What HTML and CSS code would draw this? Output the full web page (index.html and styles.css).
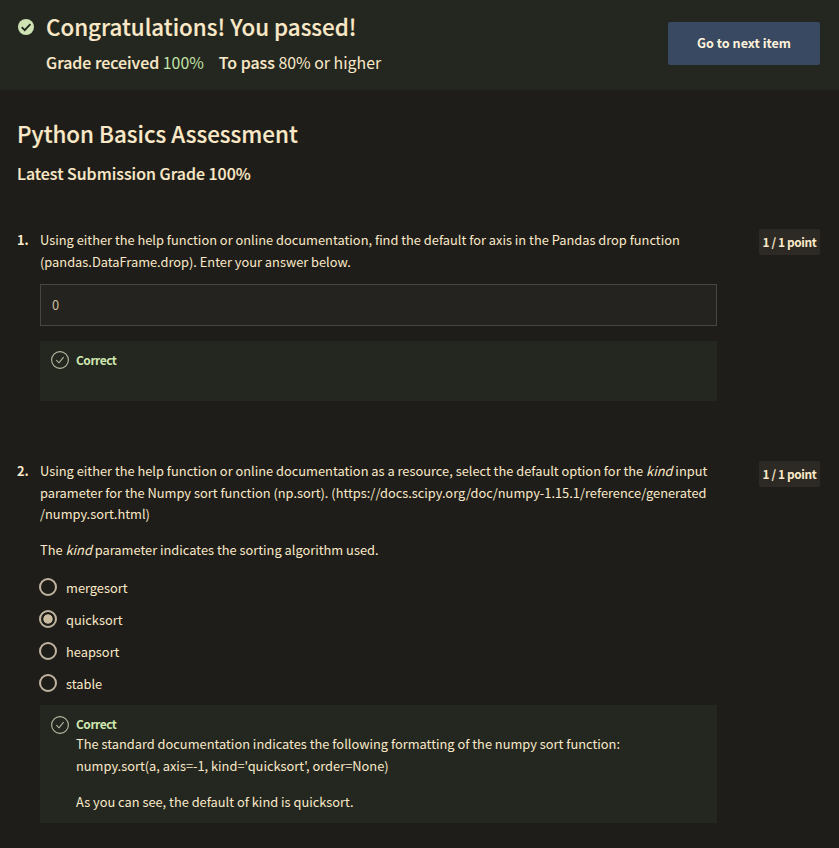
FILE: index.html
```html
<!DOCTYPE html>
<html lang="en">
<head>
<meta charset="utf-8">
<title>Python Basics Assessment</title>
<link rel="stylesheet" href="styles.css">
</head>
<body>
<header class="banner">
  <svg class="passed-icon" viewBox="0 0 16 16"><circle cx="8" cy="8" r="8"/><path d="M3.7 8.2 6.7 11.1 12.4 5.1"/></svg>
  <div class="result">
    <h1>Congratulations! You passed!</h1>
    <p class="grades"><span><b>Grade received</b> <span class="score">100%</span></span><span><b>To pass</b> 80% or higher</span></p>
  </div>
  <button class="next">Go to next item</button>
</header>
<main>
  <h2>Python Basics Assessment</h2>
  <h3>Latest Submission Grade 100%</h3>
  <section class="question">
    <span class="number">1.</span>
    <div class="content">
      <p>Using either the help function or online documentation, find the default for axis in the Pandas drop function<br>(pandas.DataFrame.drop). Enter your answer below.</p>
      <div class="answer">0</div>
      <div class="feedback empty">
        <svg class="check" viewBox="0 0 18 18"><circle cx="9" cy="9" r="8.4"/><path d="M5.3 9.2 8 11.8 12.6 6.2"/></svg>
        <div><strong>Correct</strong></div>
      </div>
    </div>
    <span class="points">1 / 1 point</span>
  </section>
  <section class="question second">
    <span class="number">2.</span>
    <div class="content">
      <p>Using either the help function or online documentation as a resource, select the default option for the <i>kind</i> input<br>parameter for the Numpy sort function (np.sort). (https://docs.scipy.org/doc/numpy-1.15.1/reference/generated<br>/numpy.sort.html)</p>
      <p class="spaced">The <i>kind</i> parameter indicates the sorting algorithm used.</p>
      <ul class="options">
        <li><span class="radio"></span>mergesort</li>
        <li><span class="radio selected"></span>quicksort</li>
        <li><span class="radio"></span>heapsort</li>
        <li><span class="radio"></span>stable</li>
      </ul>
      <div class="feedback">
        <svg class="check" viewBox="0 0 18 18"><circle cx="9" cy="9" r="8.4"/><path d="M5.3 9.2 8 11.8 12.6 6.2"/></svg>
        <div><strong>Correct</strong>
          <p>The standard documentation indicates the following formatting of the numpy sort function:<br>numpy.sort(a, axis=-1, kind='quicksort', order=None)</p>
          <p class="spaced">As you can see, the default of kind is quicksort.</p>
        </div>
      </div>
    </div>
    <span class="points">1 / 1 point</span>
  </section>
</main>
</body>
</html>
```
FILE: styles.css
```css
* { box-sizing: border-box; }
body { margin: 0; background: #1f1d19; color: #fae9c8; font: 12.83px/21.6px "Noto Sans CJK SC", "Noto Sans", sans-serif; }
h1, h2, h3, p, ul { margin: 0; padding: 0; }
.banner { display: flex; align-items: flex-start; height: 90px; padding: 0 19px 0 18px; background: #242620; }
.passed-icon { width: 16px; height: 16px; margin: 19px 12px 0 0; fill: #cfe2b4; flex: none; }
.passed-icon path { fill: none; stroke: #20241c; stroke-width: 1.8; }
.result { flex: 1; }
h1, h2, h3, .grades b { -webkit-text-stroke: .15px currentColor; }
h1 { font-size: 22.35px; font-weight: 500; line-height: 32px; margin-top: 10px; }
.grades { display: flex; gap: 15px; font-size: 15.9px; line-height: 24px; margin-top: 9px; }
.grades b { font-weight: 500; }
.score { color: #c1e3a7; }
.next { width: 152px; height: 43px; margin-top: 22px; padding: 0 0 1px; border: 0; border-radius: 2px; background: #394961; color: #fff3dc; font: 700 12.6px/20px "Noto Sans CJK SC", "Noto Sans", sans-serif; }
main { padding: 26px 19px 0 17px; }
h2 { font-size: 22.35px; font-weight: 500; line-height: 34px; }
h3 { font-size: 15.95px; font-weight: 500; line-height: 24px; margin-top: 11px; }
.question { display: grid; grid-template-columns: 23px 677px 1fr; align-items: start; margin-top: 44px; }
.question.second { margin-top: 59px; }
.number { font-weight: 700; }
.points { justify-self: end; width: 61px; height: 26px; border-radius: 2px; background: #2d2a25; font-weight: 700; font-size: 11.9px; letter-spacing: -.38px; line-height: 25px; text-align: center; }
.second .points { margin-top: 1px; }
.answer { height: 42px; margin-top: 12px; padding: 0 11px; border: 1px solid #484640; background: #25231f; line-height: 40px; color: #cdbf9f; }
.feedback { display: flex; margin-top: 5px; padding: 9px 11px; height: 118px; background: #242720; }
.feedback.empty { margin-top: 15px; height: 60px; }
.check { width: 18px; height: 18px; margin: 2px 7px 0 0; fill: none; stroke: #b3bba3; stroke-width: 1.1; flex: none; }
.empty .check { margin-top: 1px; }
.feedback strong { display: block; line-height: 20px; color: #cfe6b0; font-size: 12px; letter-spacing: -.5px; }
.feedback p:first-of-type { margin-top: -1px; }
.spaced { margin-top: 14.4px; }
.options { list-style: none; margin-top: 11px; }
.options li { display: flex; align-items: center; height: 32px; }
.radio { width: 18px; height: 18px; border: 2px solid #c0b4a0; border-radius: 50%; margin: 0 9px 1px -1px; }
.radio.selected { background: radial-gradient(circle, #c8bb9f 4.3px, transparent 5px); }
```
